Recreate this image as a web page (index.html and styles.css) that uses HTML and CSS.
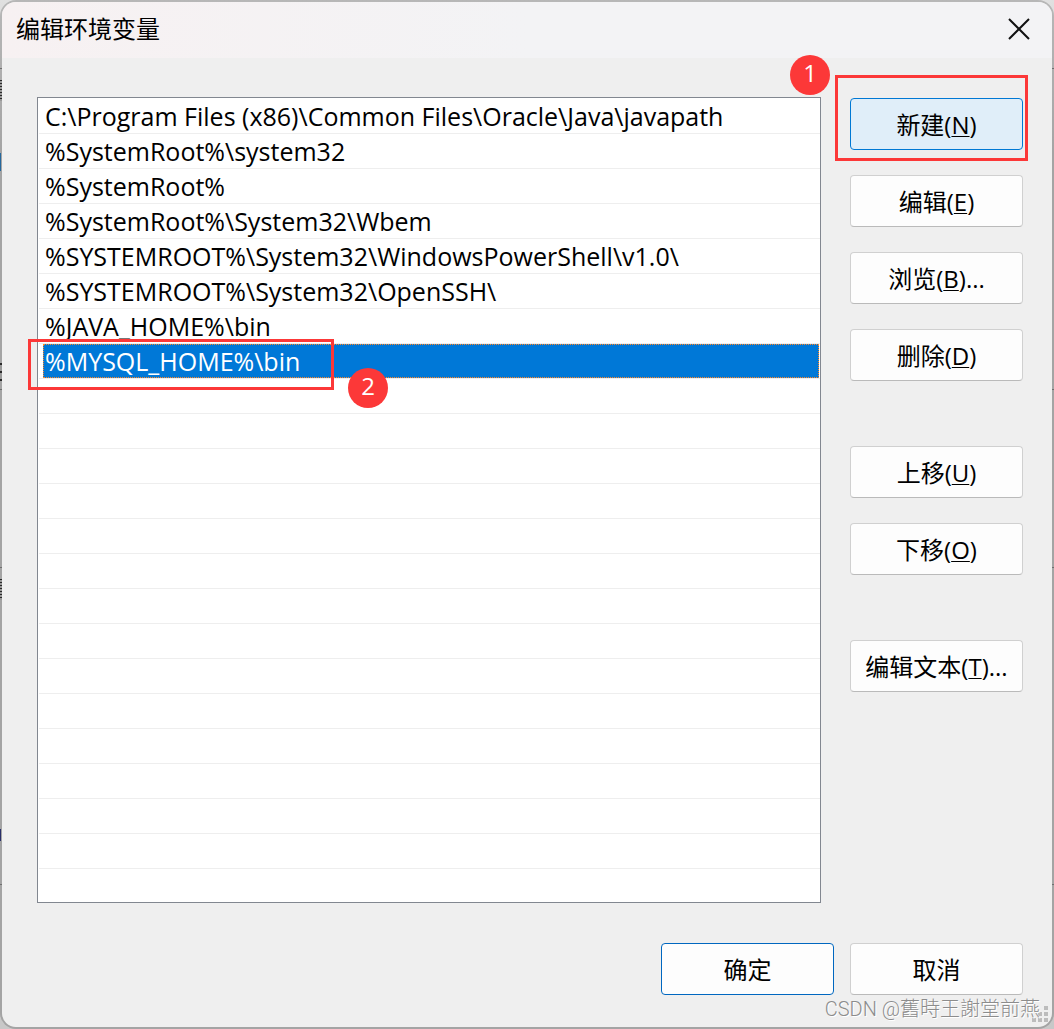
FILE: index.html
```html
<!DOCTYPE html>
<html lang="zh-CN">
<head>
<meta charset="utf-8">
<meta name="viewport" content="width=device-width, initial-scale=1">
<title>编辑环境变量</title>
<link rel="stylesheet" href="styles.css">
</head>
<body>
<main class="dialog" role="dialog" aria-labelledby="dialog-title">
  <header class="titlebar">
    <h1 class="title" id="dialog-title">编辑环境变量</h1>
    <button class="close" type="button" aria-label="关闭">
      <svg width="22" height="22" viewBox="0 0 22 22" fill="none" stroke="#111" stroke-width="2"><path d="M1 1L21 21M21 1L1 21"/></svg>
    </button>
  </header>
  <div class="content">
    <ul class="paths" role="listbox" aria-labelledby="dialog-title">
      <li class="path" role="option">C:\Program Files (x86)\Common Files\Oracle\Java\javapath</li>
      <li class="path" role="option">%SystemRoot%\system32</li>
      <li class="path" role="option">%SystemRoot%</li>
      <li class="path" role="option">%SystemRoot%\System32\Wbem</li>
      <li class="path" role="option">%SYSTEMROOT%\System32\WindowsPowerShell\v1.0\</li>
      <li class="path" role="option">%SYSTEMROOT%\System32\OpenSSH\</li>
      <li class="path" role="option">%JAVA_HOME%\bin</li>
      <li class="path selected" role="option" aria-selected="true">%MYSQL_HOME%\bin<span class="frame frame-path"></span><span class="marker marker-path">2</span></li>
    </ul>
    <div class="actions">
      <div class="group">
        <div class="highlighted">
          <button class="button hot" type="button">新建(<u>N</u>)</button>
          <span class="frame frame-new"></span>
          <span class="marker marker-new">1</span>
        </div>
        <button class="button" type="button">编辑(<u>E</u>)</button>
        <button class="button" type="button">浏览(<u>B</u>)...</button>
        <button class="button" type="button">删除(<u>D</u>)</button>
      </div>
      <div class="group">
        <button class="button" type="button">上移(<u>U</u>)</button>
        <button class="button" type="button">下移(<u>O</u>)</button>
      </div>
      <div class="group">
        <button class="button" type="button">编辑文本(<u>T</u>)...</button>
      </div>
    </div>
  </div>
  <footer class="footer">
    <button class="button default" type="button">确定</button>
    <button class="button" type="button">取消</button>
  </footer>
  <svg class="grip" width="16" height="16" viewBox="0 0 16 16" fill="#bcbcbc"><path d="M12 0h4v4h-4zM6 6h4v4H6zM12 6h4v4h-4zM0 12h4v4H0zM6 12h4v4H6zM12 12h4v4h-4z"/></svg>
  <span class="watermark">CSDN @舊時王謝堂前燕</span>
</main>
</body>
</html>
```

FILE: styles.css
```css
* {
  box-sizing: border-box;
}

/* The window behind the dialog shows only at the dialog's edges. */
body {
  margin: 0;
  min-height: 100vh;
  display: flex;
  background:
    linear-gradient(#2f7fc0, #2f7fc0) 0 153px / 1px 18px no-repeat,
    repeating-linear-gradient(#333 0 1px, #bbb 1px 3px) 0 80px / 2px 21px no-repeat,
    repeating-linear-gradient(#333 0 2px, #bbb 2px 8px) 0 363px / 2px 18px no-repeat,
    repeating-linear-gradient(#333 0 1px, #bbb 1px 3px) 0 579px / 2px 21px no-repeat,
    linear-gradient(#333a80, #333a80) 0 829px / 1px 12px no-repeat,
    linear-gradient(#888, #888) 0 68px / 100% 1px no-repeat,
    linear-gradient(#888, #888) 0 389px / 100% 1px no-repeat,
    linear-gradient(#888, #888) 0 567px / 100% 1px no-repeat,
    linear-gradient(#888, #888) 0 884px / 100% 1px no-repeat,
    linear-gradient(#e0e0e0, #c8c8c8 160px);
  color: #000;
  font-family: "Open Sans", "Noto Sans CJK SC", sans-serif;
  font-size: 24px;
}

.dialog {
  position: relative;
  flex: 1;
  display: flex;
  flex-direction: column;
  overflow: hidden;
  border: 2px solid rgba(0, 0, 0, 0.18);
  border-radius: 16px;
  background: #efefef;
  background-clip: padding-box;
}

.titlebar {
  display: flex;
  align-items: center;
  justify-content: space-between;
  height: 56px;
  padding: 0 20px 2px 14px;
  background: linear-gradient(90deg, #f7f1f2, #f3f3f5 50%, #f3f3f5);
}

.title {
  margin: 0;
  font-size: 24px;
  line-height: 32px;
  font-weight: 400;
}

.close {
  display: flex;
  padding: 2px;
  border: 0;
  background: none;
}

.content {
  flex: 1;
  display: flex;
  gap: 29px;
  padding: 39px 29px 0 35px;
}

.paths {
  flex: 1;
  margin: 0;
  padding: 1px 1px 0 5px;
  list-style: none;
  border: 1px solid #828790;
  background: repeating-linear-gradient(#fff 0 34px, #eee 34px 35px) 1px 1px no-repeat #fff;
  font-size: 25px;
}

.path {
  position: relative;
  height: 34px;
  margin-bottom: 1px;
  padding-left: 2px;
  line-height: 34px;
  white-space: nowrap;
}

.selected {
  background: #0078d7;
  color: #fff;
  outline: 1px dotted #ff8728;
  outline-offset: -1px;
}

.actions {
  display: flex;
  flex-direction: column;
  gap: 65px;
  padding-top: 1px;
}

.group {
  display: flex;
  flex-direction: column;
  gap: 25px;
}

.highlighted {
  position: relative;
  display: flex;
}

.button {
  width: 173px;
  height: 52px;
  padding: 2px 0 0;
  border: 1px solid #d0d0d0;
  border-bottom-color: #bababa;
  border-radius: 4px;
  background: #fdfdfd;
  color: #000;
  font: inherit;
  line-height: 32px;
}

.button u {
  text-decoration-thickness: 1px;
  text-underline-offset: 2px;
}

.hot {
  border-color: #0078d4;
  background: #e0eef9;
}

.default {
  border-color: #0067c0;
}

.footer {
  display: flex;
  justify-content: flex-end;
  gap: 16px;
  padding: 40px 29px 32px;
}

.frame {
  position: absolute;
  border: 3px solid #fc3838;
}

.frame-new {
  inset: -23px -5px -11px -15px;
}

.frame-path {
  top: -5px;
  left: -15px;
  width: 306px;
  height: 51px;
}

.marker {
  position: absolute;
  width: 40px;
  height: 40px;
  border-radius: 50%;
  background: #fc3838;
  color: #fff;
  font-size: 24px;
  line-height: 36px;
  text-align: center;
}

.marker-new {
  top: -43px;
  left: -60px;
}

.marker-path {
  top: 24px;
  left: 305px;
}

.grip {
  position: absolute;
  right: 4px;
  bottom: 5px;
}

.watermark {
  position: absolute;
  right: 12px;
  bottom: 4px;
  color: #8c8c8c;
  font-family: Roboto, "Noto Sans CJK TC", sans-serif;
  font-size: 20px;
  font-weight: 300;
  line-height: 28px;
  text-shadow: 1px 1px 0 #fff;
}
```
